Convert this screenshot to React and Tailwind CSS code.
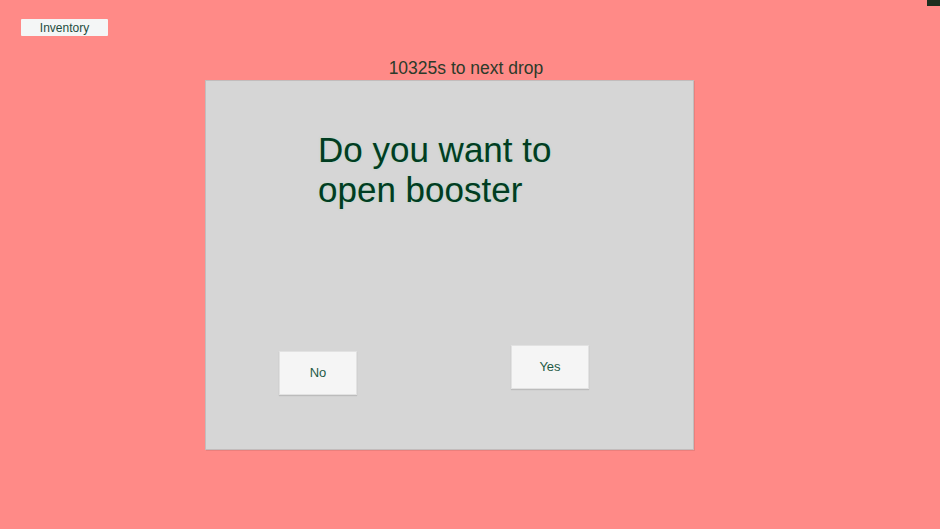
export default function App() {
  return (
    <div className="relative h-[529px] w-full overflow-hidden bg-[#ff8a87] font-['Liberation_Sans',Arial,sans-serif]">
      {/* fps readout in the corner */}
      <div className="absolute right-0 top-0 h-[6px] w-[13px] bg-[#1d2f1f]" />

      <button className="ml-[21px] mt-[19px] block h-[17px] w-[87px] rounded-[1px] bg-[#f4f6f6] pt-[1px] text-[12px] leading-[16px] text-[#1f4d40]">
        Inventory
      </button>

      <p className="ml-[366px] mt-[22px] h-[20px] w-[200px] text-center text-[17.5px] leading-[20px] text-[#2c3a2a]">
        10325s to next drop
      </p>

      <div className="ml-[205px] mt-[2px] flex h-[370px] w-[489px] flex-col border border-[#c2bcbc] bg-[#d6d6d6] shadow-[1px_1px_0_rgba(0,0,0,0.08)]">
        <h1 className="ml-[112px] mt-[49px] text-[35px] leading-[40px] text-[#013d22] [text-shadow:0_0_2px_rgba(140,225,180,0.5)]">
          Do you want to
          <br />
          open booster
        </h1>

        <div className="relative flex-1">
          <button className="absolute left-[73px] top-[141px] h-[44px] w-[78px] border border-[#e2e2e2] bg-[#f5f5f5] text-[13px] text-[#1f5a46] shadow-[0_1px_1px_rgba(0,0,0,0.12)]">
            No
          </button>
          <button className="absolute left-[305px] top-[135px] h-[44px] w-[78px] border border-[#e2e2e2] bg-[#f5f5f5] text-[13px] text-[#1f5a46] shadow-[0_1px_1px_rgba(0,0,0,0.12)]">
            Yes
          </button>
        </div>
      </div>
    </div>
  );
}
